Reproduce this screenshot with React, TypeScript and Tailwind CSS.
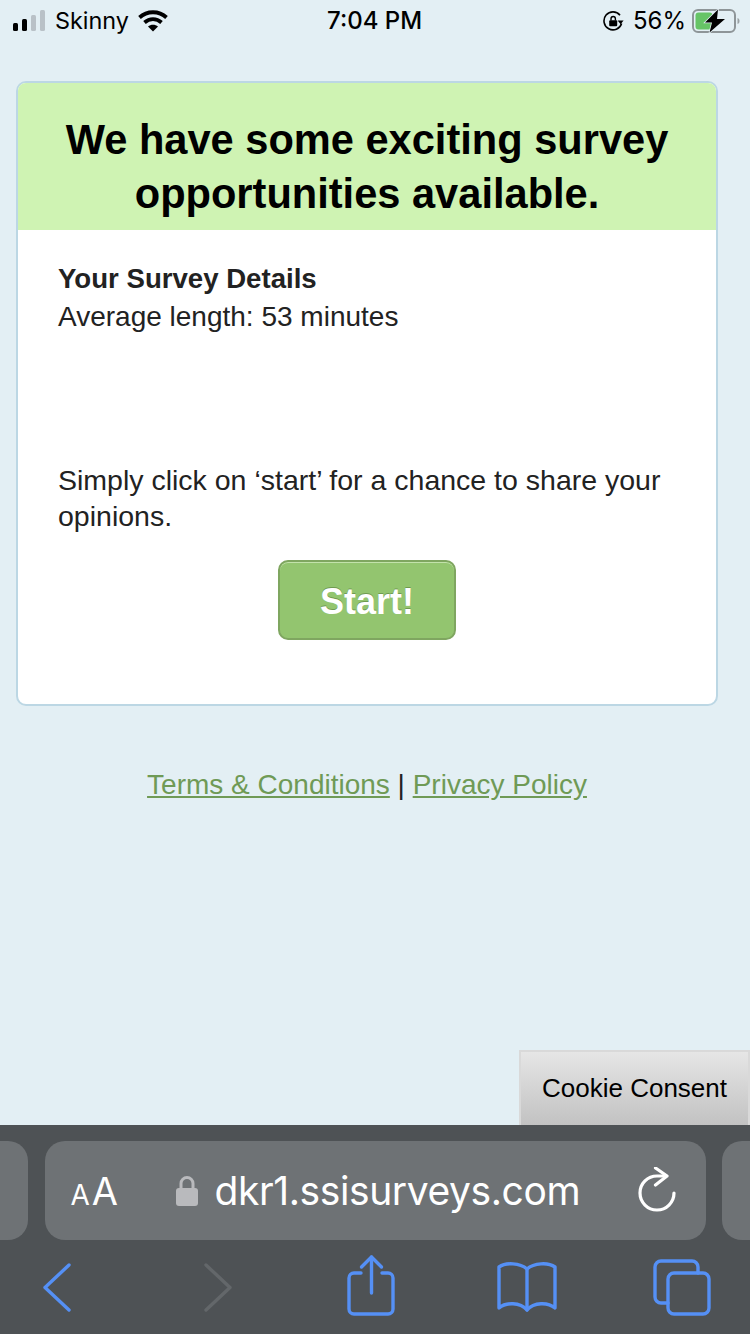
import React from "react";

const sans = "font-['Liberation_Sans',Arial,sans-serif]";
const ui = "font-['Inter','Liberation_Sans',sans-serif]";

function Signal() {
  return (
    <svg width="34" height="22" viewBox="0 0 34 22" className="shrink-0">
      <rect x="0" y="13" width="5" height="8" rx="1.5" fill="#000" />
      <rect x="9" y="9" width="5" height="12" rx="1.5" fill="#000" />
      <rect x="18" y="5" width="5" height="16" rx="1.5" fill="#b9c1c7" />
      <rect x="27" y="0" width="5" height="21" rx="1.5" fill="#b9c1c7" />
    </svg>
  );
}

function Wifi() {
  return (
    <svg width="30" height="22" viewBox="0 0 30 22" className="shrink-0">
      <path d="M1.5 7.5C9 0.5 21 0.5 28.5 7.5" fill="none" stroke="#000" strokeWidth="3.8" />
      <path d="M6.5 12.5C11.5 8 18.5 8 23.5 12.5" fill="none" stroke="#000" strokeWidth="3.8" />
      <path d="M15 21.5L10 16.5C12.8 14.3 17.2 14.3 20 16.5Z" fill="#000" />
    </svg>
  );
}

function RotationLock() {
  return (
    <svg width="21" height="21" viewBox="0 0 21 21" className="shrink-0">
      <path d="M18.6 12.5A9 9 0 1 1 17 4.2" fill="none" stroke="#000" strokeWidth="1.6" />
      <path d="M14.6 9.5H20.6L17.6 13.2Z" fill="#000" />
      <rect x="6.2" y="9.2" width="8" height="6" rx="1" fill="#000" />
      <path d="M8 9.5V7.7A2.2 2.2 0 0 1 12.4 7.7V9.5" fill="none" stroke="#000" strokeWidth="1.4" />
    </svg>
  );
}

function Battery() {
  return (
    <svg width="48" height="24" viewBox="0 0 48 24" className="shrink-0">
      <rect x="1" y="1" width="42" height="22" rx="5" fill="none" stroke="#8e9598" strokeWidth="2" />
      <rect x="3.5" y="3.5" width="17" height="17" rx="3" fill="#66c466" />
      <path d="M45.5 9V15C47 14.5 47.5 13.5 47.5 12C47.5 10.5 47 9.5 45.5 9Z" fill="#9aa1a4" />
      <path d="M26 0.5L13 13.5H20L17.5 23.5L33 10H25Z" fill="#000" stroke="#e3eff4" strokeWidth="1.5" paintOrder="stroke" />
    </svg>
  );
}

function StatusBar() {
  return (
    <div className={`relative flex h-[42px] shrink-0 items-center justify-between pl-[13px] pr-[10px] text-black ${ui}`}>
      <div className="flex items-center">
        <Signal />
        <span className="ml-[8px] text-[23.4px] leading-none">Skinny</span>
        <span className="ml-[9px]">
          <Wifi />
        </span>
      </div>
      <span className="absolute left-[327px] top-[7px] text-[24px] font-medium leading-[28px]">7:04 PM</span>
      <div className="flex items-center text-[24px]">
        <RotationLock />
        <span className="ml-[9px] mr-[6px] leading-none">56%</span>
        <Battery />
      </div>
    </div>
  );
}

function Card() {
  return (
    <div className={`mt-[39px] h-[625px] overflow-hidden rounded-[10px] border-2 border-[#bcd7e4] bg-white ${sans}`}>
      <div className="bg-[#cff3b3] px-4 pb-[9px] pt-[30px] text-center text-[41.6px] font-bold leading-[54px] text-black">
        We have some exciting survey opportunities available.
      </div>
      <div className="px-10 pt-[30px] text-[28px] leading-[38px] text-[#222]">
        <div className="text-[27.6px] font-bold">Your Survey Details</div>
        <div>Average length: 53 minutes</div>
        <p className="mt-[126px] text-[28.5px] leading-[36px]">Simply click on ‘start’ for a chance to share your opinions.</p>
        <div className="mt-[26px] flex justify-center">
          <button className="h-[80px] w-[178px] rounded-[10px] border-2 border-[#7fa660] bg-[#93c56f] pt-[3px] text-[36px] font-bold text-white shadow-[inset_0_1px_0_#c3e2ab] [text-shadow:0_-1px_0_#6f9a50]">
            Start!
          </button>
        </div>
      </div>
    </div>
  );
}

function Footer() {
  return (
    <div className={`mt-[61px] text-center text-[28px] leading-[36px] text-[#222] ${sans}`}>
      <a className="text-[#6f9a56] underline">Terms &amp; Conditions</a>
      <span> | </span>
      <a className="text-[#6f9a56] underline">Privacy Policy</a>
    </div>
  );
}

function Cookie() {
  return (
    <div className="flex justify-end">
      <div className={`flex h-[75px] w-[231px] items-center justify-center border-2 border-b-0 border-[#d9d9d9] bg-gradient-to-b from-[#e6e6e6] to-[#c2c2c2] text-[26px] text-black ${sans}`}>
        Cookie Consent
      </div>
    </div>
  );
}

function SafariBar() {
  const blue = {
    fill: "none",
    stroke: "#5590f5",
    strokeWidth: 3.4,
    strokeLinecap: "round" as const,
    strokeLinejoin: "round" as const,
  };
  return (
    <div className="flex h-[209px] shrink-0 flex-col bg-[#4e5255]">
      <div className="mt-4 flex h-[99px] items-stretch justify-between">
        <div className="h-full w-[28px] rounded-r-[20px] bg-[#6e7275]" />
        <div className={`flex w-[661px] items-center rounded-[20px] bg-[#6e7275] text-white ${ui}`}>
          <span className="ml-[26px] flex w-[50px] items-baseline">
            <span className="text-[28px] leading-none">A</span>
            <span className="ml-[2px] text-[38px] leading-none">A</span>
          </span>
          <svg width="24" height="34" viewBox="0 0 24 34" className="ml-[54px] shrink-0">
            <path d="M6 15V9.5a6 6 0 0 1 12 0V15" fill="none" stroke="#b9babd" strokeWidth="3" />
            <rect x="1" y="14" width="22" height="18" rx="3" fill="#b9babd" />
          </svg>
          <span className="ml-[16px] text-[39px] leading-none tracking-[-0.4px]">dkr1.ssisurveys.com</span>
          <svg width="40" height="48" viewBox="0 0 40 48" fill="none" stroke="#fff" strokeWidth="3.2" strokeLinecap="round" strokeLinejoin="round" className="ml-auto mr-[29px] shrink-0">
            <path d="M29 9H20A17 17 0 1 0 37 26" />
            <path d="M18.5 1L30 9L18.5 18" />
          </svg>
        </div>
        <div className="h-full w-[28px] rounded-l-[20px] bg-[#6e7275]" />
      </div>
      <div className="flex flex-1 items-center pl-[42px]">
        <svg width="29" height="49" viewBox="0 0 29 49" {...blue} className="shrink-0">
          <path d="M27 2L3 24.5L27 47" />
        </svg>
        <svg width="29" height="49" viewBox="0 0 29 49" {...blue} stroke="#63676a" className="ml-[133px] shrink-0">
          <path d="M2 2L26 24.5L2 47" />
        </svg>
        <svg width="50" height="62" viewBox="0 0 50 62" {...blue} className="ml-[113px] -mt-[4px] shrink-0">
          <path d="M15 19H8a5 5 0 0 0-5 5V55a5 5 0 0 0 5 5H42a5 5 0 0 0 5-5V24a5 5 0 0 0-5-5H36" />
          <path d="M25.5 39V3" />
          <path d="M15.5 13L25.5 3L35.5 13" />
        </svg>
        <svg width="62" height="52" viewBox="0 0 62 52" {...blue} className="ml-[100px] shrink-0">
          <path d="M31 8C24 2 10 1 3 6V47C10 41 24 41 31 49C38 41 52 41 59 47V6C52 1 38 2 31 8Z" />
          <path d="M31 8V49" />
        </svg>
        <svg width="59" height="57" viewBox="0 0 59 57" {...blue} className="ml-[95px] shrink-0">
          <path d="M15 44H8a6 6 0 0 1-6-6V8a6 6 0 0 1 6-6H39a6 6 0 0 1 6 6V14" />
          <rect x="15" y="14" width="41" height="41" rx="6" />
        </svg>
      </div>
    </div>
  );
}

export default function App() {
  return (
    <div className="flex h-[1334px] w-[750px] flex-col overflow-hidden bg-[#e3eff4]">
      <StatusBar />
      <div className="w-[718px] pl-4">
        <Card />
        <Footer />
      </div>
      <div className="flex-1" />
      <Cookie />
      <SafariBar />
    </div>
  );
}
